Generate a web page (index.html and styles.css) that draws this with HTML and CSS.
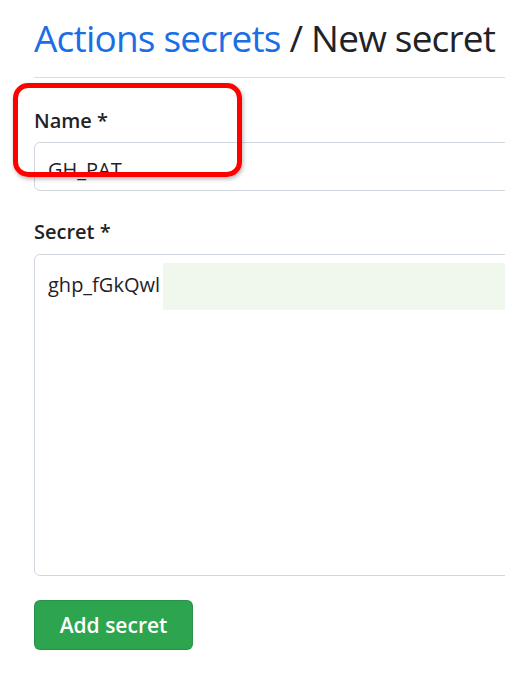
FILE: index.html
```html
<!DOCTYPE html>
<html lang="en">
<head>
<meta charset="utf-8">
<title>New secret</title>
<link rel="stylesheet" href="styles.css">
</head>
<body>
<main class="page">
  <div class="header">
    <h1 class="title"><a class="crumb" href="#">Actions secrets</a> / New secret</h1>
  </div>
  <form class="form">
    <div class="group group-name">
      <label class="label">Name *</label>
      <div class="input">GH_PAT</div>
    </div>
    <div class="group group-secret">
      <label class="label">Secret *</label>
      <div class="textarea">ghp_fGkQwl<span class="redact"></span></div>
    </div>
    <button class="btn" type="button">Add secret</button>
  </form>
  <div class="callout"></div>
</main>
</body>
</html>
```
FILE: styles.css
```css
html, body {
  margin: 0;
  padding: 0;
  background: #ffffff;
  overflow: hidden;
}
body {
  font-family: "Open Sans", "Noto Sans", sans-serif;
  color: #1f2328;
}
.page {
  position: relative;
  width: 760px;
  padding-left: 34px;
}
.header {
  padding-top: 14px;
  padding-bottom: 15px;
  border-bottom: 1px solid #d8dee4;
}
.title {
  margin: 0;
  font-size: 37px;
  line-height: 48px;
  letter-spacing: -0.8px;
  font-weight: 400;
  color: #1f2328;
  white-space: nowrap;
}
.crumb {
  color: #1a6ee6;
  text-decoration: none;
}
.form {
  display: flex;
  flex-direction: column;
  align-items: flex-start;
}
.group {
  display: flex;
  flex-direction: column;
  width: 100%;
}
.group-name { margin-top: 29px; }
.group-secret { margin-top: 27px; }
.label {
  font-size: 20px;
  line-height: 28px;
  font-weight: 600;
  color: #1f2328;
}
.input {
  margin-top: 7px;
  height: 44px;
  border: 1px solid #d0d7de;
  border-radius: 6px;
  padding: 3px 0 0 13px;
  font-size: 20px;
  line-height: 47px;
  color: #1f2328;
  overflow: hidden;
}
.textarea {
  position: relative;
  margin-top: 8px;
  border: 1px solid #d0d7de;
  border-radius: 6px;
  padding: 16px 0 0 13px;
  box-sizing: border-box;
  height: 322px;
  font-size: 20px;
  line-height: 28px;
  color: #1f2328;
}
.redact {
  position: absolute;
  left: 128px;
  top: 8px;
  width: 600px;
  height: 47px;
  background: #f0f7ec;
}
.btn {
  margin-top: 24px;
  width: 159px;
  height: 50px;
  border: 1px solid rgba(31,35,40,0.15);
  border-radius: 6px;
  background: #2da44e;
  color: #ffffff;
  font-family: "Open Sans", "Noto Sans", sans-serif;
  font-size: 21px;
  font-weight: 600;
  padding: 0;
}
.callout {
  position: absolute;
  left: 13px;
  top: 83px;
  width: 229px;
  height: 94px;
  box-sizing: border-box;
  border: 5px solid #ff0000;
  border-radius: 15px;
  box-shadow: 1px 2px 4px rgba(0,0,0,0.3);
}
```
